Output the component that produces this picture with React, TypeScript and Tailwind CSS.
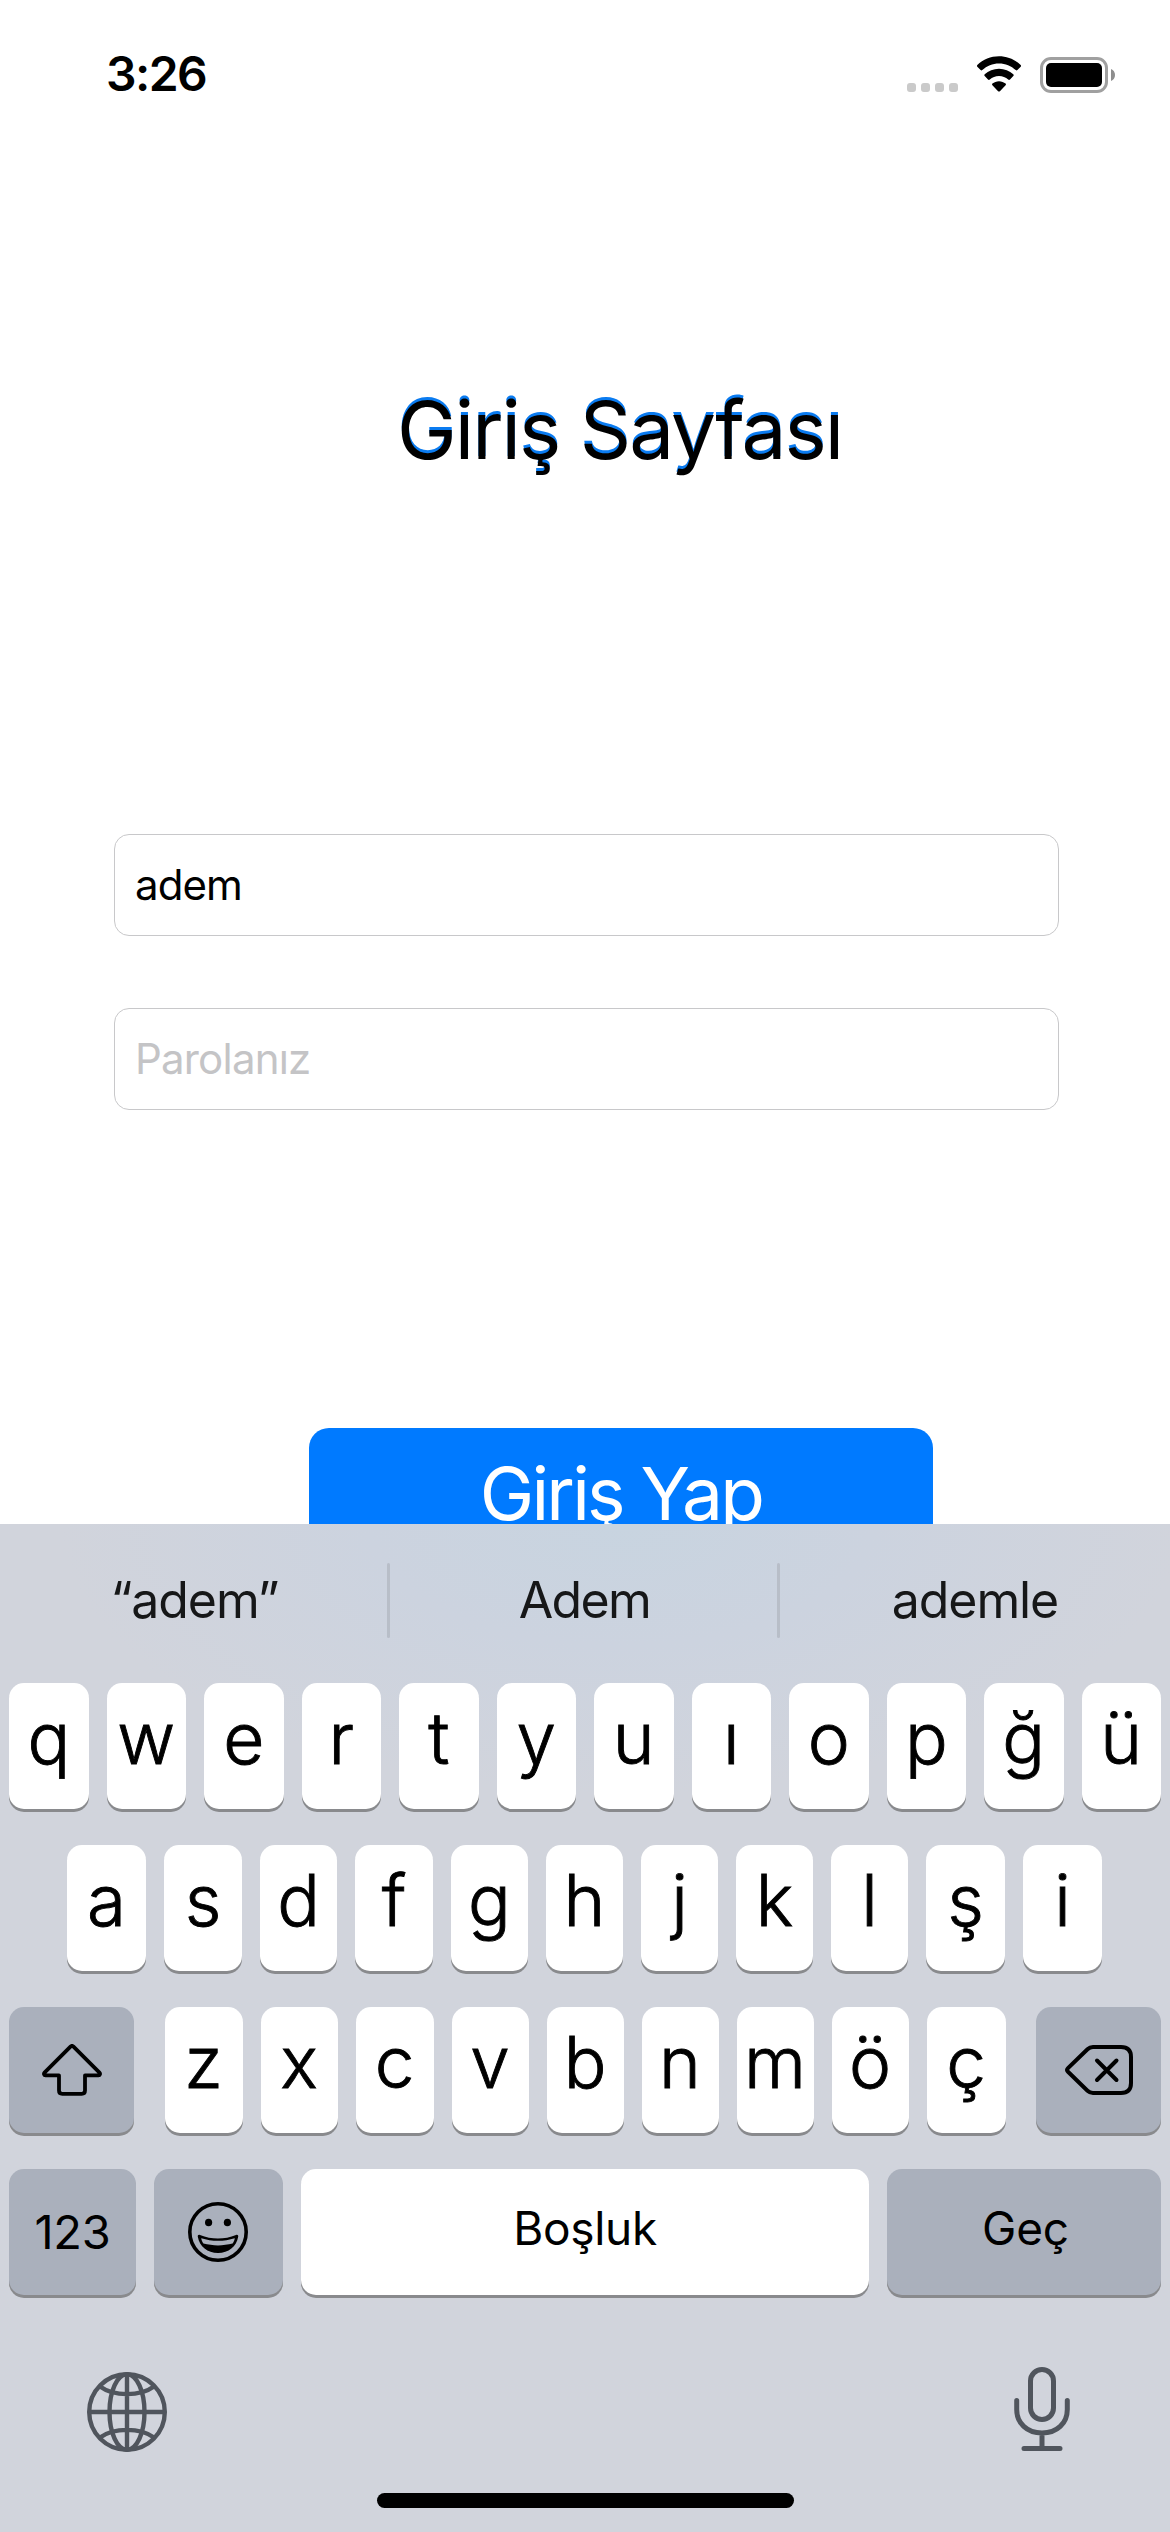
import type { ReactNode } from "react";

const ROW_1 = ["q", "w", "e", "r", "t", "y", "u", "ı", "o", "p", "ğ", "ü"];
const ROW_2 = ["a", "s", "d", "f", "g", "h", "j", "k", "l", "ş", "i"];
const ROW_3 = ["z", "x", "c", "v", "b", "n", "m", "ö", "ç"];

function LetterKey({ label }: { label: string }) {
  return (
    <button className="flex h-[126px] min-w-0 items-center justify-center rounded-[15px] bg-white pb-[15px] text-[71px] leading-none font-light text-black shadow-[0_3px_0_#898a8d] [-webkit-text-stroke:0.900px_black]">
      {label}
    </button>
  );
}

function ActionKey({ className, children }: { className: string; children: ReactNode }) {
  return (
    <button
      className={`flex h-[126px] items-center justify-center rounded-[15px] leading-none text-black shadow-[0_3px_0_#898a8d] ${className}`}
    >
      {children}
    </button>
  );
}

function WifiIcon() {
  return (
    <svg width="48" height="36" viewBox="0 0 48 36" fill="black">
      <path d="M24 7.2c6.4 0 12.300 2.500 16.700 6.600.5.500 1.200.5 1.700 0l3.300-3.400c.5-.5.5-1.300 0-1.800C39.900 3.200 32.200 0 24 0S8.100 3.200 2.300 8.600c-.5.5-.5 1.300 0 1.800l3.300 3.400c.5.5 1.200.5 1.700 0C11.700 9.700 17.600 7.200 24 7.200Z" transform="translate(0 .3)" />
      <path d="M24 19.500c3.500 0 6.700 1.300 9.200 3.500.5.500 1.300.5 1.800 0l3.300-3.400c.5-.5.5-1.300 0-1.800C34.500 14.400 29.500 12.300 24 12.300S13.500 14.400 9.700 17.800c-.5.5-.5 1.300 0 1.800L13 23c.5.500 1.300.5 1.800 0 2.500-2.200 5.700-3.500 9.200-3.500Z" transform="translate(0 .5)" />
      <path d="M30.600 27.600c.5.500.5 1.200 0 1.700l-5.700 5.900c-.5.5-1.300.5-1.800 0l-5.700-5.900c-.5-.5-.5-1.200 0-1.700 1.800-1.500 4.100-2.400 6.600-2.400s4.800.9 6.600 2.400Z" />
    </svg>
  );
}

function BatteryIcon() {
  return (
    <svg width="76" height="36" viewBox="0 0 76 36">
      <rect x="1.500" y="1.500" width="65" height="33" rx="9.500" fill="none" stroke="#a0a0a0" strokeWidth="3" />
      <rect x="6" y="6" width="56" height="24" rx="5" fill="black" />
      <path d="M71 12c2.500 1 4 3.300 4 6s-1.500 5-4 6Z" fill="#8e8e8e" />
    </svg>
  );
}

function ShiftIcon() {
  return (
    <svg width="60" height="52" viewBox="0 0 60 52" fill="none" stroke="black" strokeWidth="3.800" strokeLinejoin="round">
      <path d="M28.500 2.700 2.500 28.600c-1 1-.5 2.800 1 2.800H17V46.500c0 2 1.300 3.300 3.300 3.300h19.400c2 0 3.300-1.300 3.300-3.300V31.400h13.500c1.500 0 2-1.800 1-2.800L31.500 2.700c-1-1-2-1-3 0Z" />
    </svg>
  );
}

function DeleteIcon() {
  return (
    <svg width="68" height="50" viewBox="0 0 68 50" fill="none" stroke="black" strokeWidth="4" strokeLinecap="round" strokeLinejoin="round">
      <path d="M28 2h28c6.500 0 10 3.500 10 10v26c0 6.500-3.500 10-10 10H28c-2.200 0-3.800-.6-5.500-2.200L3 26.800c-1.200-1.200-1.200-2.400 0-3.600L22.500 4.200C24.200 2.600 25.800 2 28 2Z" />
      <path d="m32 15.500 19.500 19.500M51.500 15.500 32 35" />
    </svg>
  );
}

function EmojiIcon() {
  return (
    <svg width="60" height="60" viewBox="0 0 60 60">
      <circle cx="30" cy="30" r="28.200" fill="none" stroke="black" strokeWidth="3.600" />
      <ellipse cx="20.600" cy="20.500" rx="3.600" ry="3.800" fill="black" />
      <ellipse cx="39.400" cy="20.500" rx="3.600" ry="3.800" fill="black" />
      <path d="M12 33c11.500 4.800 24.500 4.800 36 0 1.500-.6 2.500.2 2.200 1.800C48.500 44.500 40.500 51 30 51S11.500 44.500 9.800 34.800C9.500 33.200 10.500 32.400 12 33Z" fill="black" />
      <path d="M13.200 36.300c10.800 3.400 22.800 3.400 33.600 0-.4 2-1 3.500-2.200 5.300-9.500 2.400-19.700 2.400-29.200 0-1.200-1.800-1.800-3.300-2.200-5.300Z" fill="#aab0bc" />
    </svg>
  );
}

function GlobeIcon() {
  return (
    <svg width="80" height="80" viewBox="0 0 80 80" fill="none" stroke="#50555d" strokeWidth="4.400">
      <circle cx="40" cy="40" r="37.800" />
      <ellipse cx="40" cy="40" rx="17.500" ry="37.800" />
      <path d="M40 2v76M2 40h76M13 14.500c14 10.200 40 10.200 54 0M13 65.500c14-10.200 40-10.200 54 0" />
    </svg>
  );
}

function MicIcon() {
  return (
    <svg width="56" height="85" viewBox="0 0 56 85" fill="none" stroke="#50555d" strokeWidth="5" strokeLinecap="round">
      <rect x="16.500" y="2.500" width="23" height="50" rx="11.500" />
      <path d="M2.700 33.500v9C2.700 56.300 13 66 28 66s25.300-9.700 25.300-23.500v-9M28 66v15M10 81.500h36" />
    </svg>
  );
}

function Divider() {
  return <div className="h-[75px] w-[3px] rounded-full bg-[#b8bec8]" />;
}

export default function App() {
  return (
    <div className="flex h-[2532px] w-[1170px] flex-col overflow-hidden bg-white font-['Inter',sans-serif] text-black">
      <main className="flex h-[1524px] shrink-0 flex-col overflow-hidden">
        <header className="flex h-[148px] shrink-0 items-center justify-between pr-[54px] pl-[106px]">
          <span className="text-[48px] leading-none font-semibold tracking-[-1.600px]">3:26</span>
          <div className="flex items-end">
            <div className="mb-px flex gap-[5px]">
              {[0, 1, 2, 3].map((dot) => (
                <span key={dot} className="size-[9px] rounded-[3px] bg-[#cacaca]" />
              ))}
            </div>
            <div className="mb-px ml-[17px]">
              <WifiIcon />
            </div>
            <div className="ml-[17px]">
              <BatteryIcon />
            </div>
          </div>
        </header>

        <h1 className="mt-[232px] ml-[397px] h-[100px] shrink-0 text-[80px] leading-[100px] tracking-[-1.950px] whitespace-nowrap [text-shadow:0_-3px_0_#0a7bf0]">
          Giriş Sayfası
        </h1>

        <div className="mt-[354px] ml-[114px] flex w-[945px] shrink-0 flex-col gap-[72px]">
          <input
            defaultValue="adem"
            className="h-[102px] rounded-[15px] border border-[#c8c8ca] px-[20px] pb-[2px] text-[42px] tracking-[-0.900px] outline-none"
          />
          <input
            placeholder="Parolanız"
            className="h-[102px] rounded-[15px] border border-[#c8c8ca] px-[20px] pb-[2px] text-[42px] tracking-[-0.800px] outline-none placeholder:text-[#c4c4c6]"
          />
        </div>

        <button className="mt-[318px] ml-[309px] h-[131px] w-[624px] shrink-0 rounded-[20px] bg-[#007aff] text-[73px] leading-[131px] tracking-[-2.800px] text-white">
          Giriş Yap
        </button>
      </main>

      <section className="flex h-[1008px] shrink-0 flex-col bg-[#d1d4dc] bg-[radial-gradient(ellipse_560px_270px_at_621px_0px,#c8d4e0_0%,#ccd3df_45%,#d1d4dc_100%)] bg-no-repeat">
        <div className="flex h-[153px] items-center text-[50px] tracking-[-1.100px] text-[#161718]">
          <span className="w-[387px] pl-[2px] text-center">“adem”</span>
          <Divider />
          <span className="w-[387px] pl-[2px] text-center tracking-[-1.600px]">Adem</span>
          <Divider />
          <span className="flex-1 text-center">ademle</span>
        </div>

        <div className="mt-[6px] grid grid-cols-12 gap-[18px] px-[9px]">
          {ROW_1.map((letter) => (
            <LetterKey key={letter} label={letter} />
          ))}
        </div>

        <div className="mt-9 ml-[67px] grid w-[1035px] grid-cols-[79px_78px_77px_78px_77px_77px_77px_77px_77px_79px_79px] gap-[18px]">
          {ROW_2.map((letter) => (
            <LetterKey key={letter} label={letter} />
          ))}
        </div>

        <div className="mt-9 flex justify-between px-[9px]">
          <ActionKey className="w-[125px] bg-[#aab0bc]">
            <ShiftIcon />
          </ActionKey>
          <div className="grid grid-cols-[78px_77px_78px_77px_77px_77px_77px_77px_79px] gap-[18px]">
            {ROW_3.map((letter) => (
              <LetterKey key={letter} label={letter} />
            ))}
          </div>
          <ActionKey className="w-[125px] bg-[#aab0bc]">
            <DeleteIcon />
          </ActionKey>
        </div>

        <div className="mt-9 flex gap-[18px] px-[9px]">
          <ActionKey className="w-[127px] bg-[#aab0bc] pb-[2px] text-[47px] tracking-[-0.300px]">123</ActionKey>
          <ActionKey className="w-[129px] bg-[#aab0bc] pr-px">
            <EmojiIcon />
          </ActionKey>
          <ActionKey className="w-[568px] bg-white pb-[8px] text-[46px] tracking-[-0.300px]">Boşluk</ActionKey>
          <ActionKey className="w-[274px] bg-[#aab0bc] pb-[8px] pl-[3px] text-[46px] tracking-[-0.200px]">Geç</ActionKey>
        </div>

        <div className="mt-[71px] flex h-[86px] items-end justify-between pr-[100px] pl-[87px]">
          <GlobeIcon />
          <MicIcon />
        </div>

        <div className="mt-[41px] ml-[377px] h-[15px] w-[417px] rounded-full bg-black" />
      </section>
    </div>
  );
}
